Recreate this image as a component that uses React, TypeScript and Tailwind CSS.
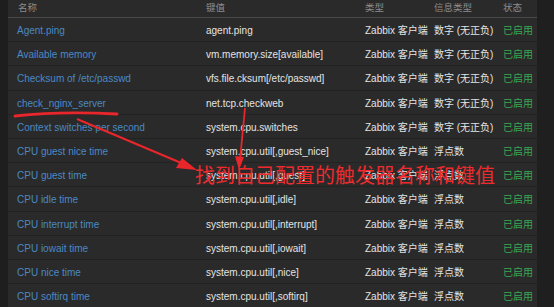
const rows = [
  ['Agent.ping', 'agent.ping', '数字 (无正负)'],
  ['Available memory', 'vm.memory.size[available]', '数字 (无正负)'],
  ['Checksum of /etc/passwd', 'vfs.file.cksum[/etc/passwd]', '数字 (无正负)'],
  ['check_nginx_server', 'net.tcp.checkweb', '数字 (无正负)'],
  ['Context switches per second', 'system.cpu.switches', '数字 (无正负)'],
  ['CPU guest nice time', 'system.cpu.util[,guest_nice]', '浮点数'],
  ['CPU guest time', 'system.cpu.util[,guest]', '浮点数'],
  ['CPU idle time', 'system.cpu.util[,idle]', '浮点数'],
  ['CPU interrupt time', 'system.cpu.util[,interrupt]', '浮点数'],
  ['CPU iowait time', 'system.cpu.util[,iowait]', '浮点数'],
  ['CPU nice time', 'system.cpu.util[,nice]', '浮点数'],
  ['CPU softirq time', 'system.cpu.util[,softirq]', '浮点数'],
]

const cols = 'grid grid-cols-[198px_159px_69px_69px_34px] items-center'

export default function App() {
  return (
    <div
      className="relative flex w-[554px] h-[307px] overflow-hidden bg-[#2a2a2a] text-[10px]"
      style={{ fontFamily: '"Liberation Sans", "Noto Sans CJK SC", sans-serif' }}
    >
      {/* left gutter */}
      <div className="w-[8px] shrink-0 bg-[#1e1e1e]" />

      {/* table */}
      <div className="w-[529px] shrink-0">
        <div className={`${cols} h-[18px] border-b border-[#4a4a4a] text-[#8c8c8c] text-[9.5px]`}>
          <span className="pl-[10px]">名称</span>
          <span>键值</span>
          <span>类型</span>
          <span>信息类型</span>
          <span>状态</span>
        </div>
        {rows.map(([name, key, info]) => (
          <div key={name} className={`${cols} h-[24.2px] pt-[2px] border-b border-[#222]`}>
            <span className="pl-[9px] text-[#4a89c2] whitespace-nowrap">{name}</span>
            <span className="text-[#e4e4e4] whitespace-nowrap">{key}</span>
            <span className="text-[#e4e4e4] whitespace-nowrap">Zabbix 客户端</span>
            <span className="text-[#e4e4e4] whitespace-nowrap">{info}</span>
            <span className="text-[#38a853] whitespace-nowrap">已启用</span>
          </div>
        ))}
      </div>

      {/* right scrollbar area */}
      <div className="flex-1 bg-[#1f1f1f]" />

      {/* hand-drawn annotation */}
      <svg className="absolute left-0 top-0 pointer-events-none" width="554" height="307">
        <path d="M15 116 Q60 111 117 114" stroke="#e8262b" strokeWidth="3" fill="none" strokeLinecap="round" />
        <path d="M77 119 L186 165" stroke="#e8262b" strokeWidth="2" fill="none" />
        <polygon points="197,170 176,168 182,158" fill="#e8262b" />
        <path d="M245 108 L240 160" stroke="#e8262b" strokeWidth="1.8" fill="none" />
        <polygon points="239,170 235,156 244,157" fill="#e8262b" />
      </svg>
      <div className="absolute left-[195px] top-[166px] text-[20px] leading-none text-[#ee2a2e] whitespace-nowrap">
        找到自己配置的触发器名称和键值
      </div>
    </div>
  )
}
